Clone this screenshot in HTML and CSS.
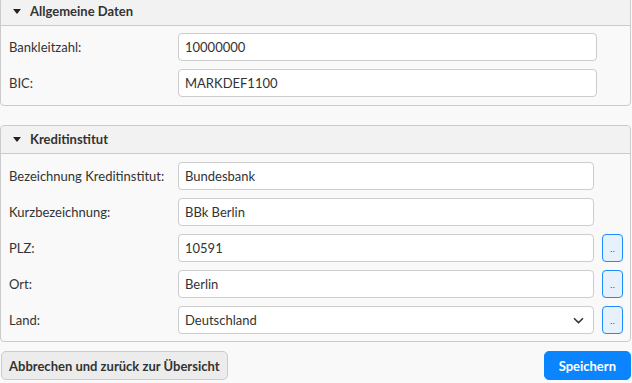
FILE: index.html
```html
<!DOCTYPE html>
<html lang="de">
<head>
    <meta charset="UTF-8">
    <title>Bankleitzahl bearbeiten</title>
    <link rel="stylesheet" href="styles.css">
</head>
<body>
    <div class="panel first">
        <div class="panel-head"><span class="caret"></span>Allgemeine Daten</div>
        <div class="panel-body">
            <div class="row">
                <label>Bankleitzahl:</label>
                <input type="text" value="10000000">
            </div>
            <div class="row">
                <label>BIC:</label>
                <input type="text" value="MARKDEF1100">
            </div>
        </div>
    </div>

    <div class="panel">
        <div class="panel-head"><span class="caret"></span>Kreditinstitut</div>
        <div class="panel-body wide">
            <div class="row">
                <label>Bezeichnung Kreditinstitut:</label>
                <input type="text" value="Bundesbank">
                <span class="spacer"></span>
            </div>
            <div class="row">
                <label>Kurzbezeichnung:</label>
                <input type="text" value="BBk Berlin">
                <span class="spacer"></span>
            </div>
            <div class="row">
                <label>PLZ:</label>
                <input type="text" value="10591">
                <button class="pick">..</button>
            </div>
            <div class="row">
                <label>Ort:</label>
                <input type="text" value="Berlin">
                <button class="pick">..</button>
            </div>
            <div class="row">
                <label>Land:</label>
                <div class="select">
                    <span>Deutschland</span>
                    <svg width="11" height="7" viewBox="0 0 11 7"><path d="M1 1.2 L5.5 5.6 L10 1.2" fill="none" stroke="#333" stroke-width="1.5"/></svg>
                </div>
                <button class="pick">..</button>
            </div>
        </div>
    </div>

    <div class="actions">
        <button class="btn">Abbrechen und zurück zur Übersicht</button>
        <button class="btn primary">Speichern</button>
    </div>
</body>
</html>
```

FILE: styles.css
```css
body {
    margin: 0;
    background: #f9f9f9;
    font-family: Lato, "Noto Sans", sans-serif;
    font-size: 13px;
    color: #333;
}
.panel {
    border: 1px solid #cbcbcb;
    border-radius: 4px;
    margin: 0 1px 19px 0;
    background: #f9f9f9;
}
.panel.first {
    margin-top: -3px;
}
.panel-head {
    height: 27px;
    line-height: 27px;
    background: #f2f2f2;
    border-bottom: 1px solid #cbcbcb;
    border-radius: 4px 4px 0 0;
    padding-left: 12px;
    font-weight: bold;
}
.caret {
    display: inline-block;
    width: 0;
    height: 0;
    border-left: 4px solid transparent;
    border-right: 4px solid transparent;
    border-top: 5px solid #222;
    margin-right: 9px;
    vertical-align: 2px;
}
.panel-body {
    padding: 7px 33px 8px 8px;
    display: flex;
    flex-direction: column;
    gap: 8px;
}
.panel-body.wide {
    padding: 8px 7px 7px 8px;
}
.row {
    display: flex;
    align-items: center;
    gap: 8px;
}
.row label {
    width: 161px;
}
.row input, .select {
    flex: 1;
    height: 28px;
    box-sizing: border-box;
    border: 1px solid #ccc;
    border-radius: 4px;
    background: #fff;
    padding: 0 6px;
    font: inherit;
    color: #333;
}
.select {
    display: flex;
    align-items: center;
    justify-content: space-between;
    padding-right: 9px;
}
.spacer {
    width: 21px;
}
.pick {
    width: 21px;
    height: 28px;
    box-sizing: border-box;
    border: 1px solid #1a8cff;
    border-radius: 4px;
    background: #e6f1fc;
    padding: 2px 0 0;
    font-size: 9px;
    color: #333;
}
.actions {
    display: flex;
    justify-content: space-between;
    padding: 0 1px;
    margin-top: -10px;
}
.btn {
    height: 29px;
    padding: 0 7px;
    border: 1px solid #cbcbcb;
    border-radius: 5px;
    background: #ececec;
    font: inherit;
    font-weight: bold;
    color: #333;
}
.btn.primary {
    background: #0a85ff;
    border-color: #0a85ff;
    color: #fff;
    padding: 0 14px;
}
```
